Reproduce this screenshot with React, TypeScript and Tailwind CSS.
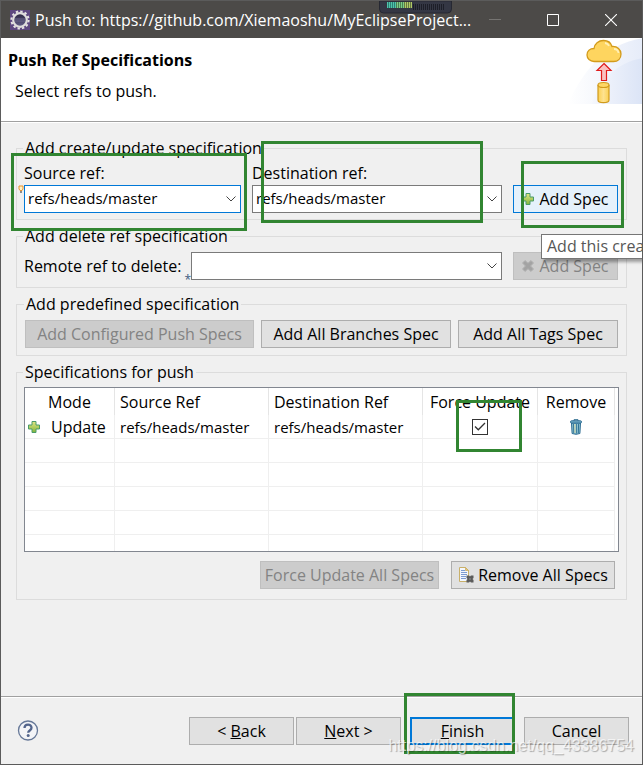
import type { ButtonHTMLAttributes, ReactNode, SelectHTMLAttributes } from "react";

function Highlight({ className }: { className: string }) {
  return (
    <span
      aria-hidden="true"
      className={`pointer-events-none absolute z-10 border-3 border-[#318531] ${className}`}
    />
  );
}

function Group({ title, className, children }: { title: string; className: string; children: ReactNode }) {
  return (
    <fieldset className={`min-w-0 border border-[#dcdcdc] ${className}`}>
      <legend className="-ml-px px-0.5 leading-6">{title}</legend>
      {children}
    </fieldset>
  );
}

function PushButton({ className = "", children, ...rest }: ButtonHTMLAttributes<HTMLButtonElement>) {
  return (
    <button
      type="button"
      className={`flex h-7 shrink-0 items-center justify-center whitespace-nowrap border border-[#adadad] bg-[#e1e1e1] disabled:border-[#bfbfbf] disabled:bg-[#cccccc] disabled:text-[#838383] ${className}`}
      {...rest}
    >
      {children}
    </button>
  );
}

function Combo({ focused, children, ...rest }: SelectHTMLAttributes<HTMLSelectElement> & { focused?: boolean }) {
  return (
    <div className="relative w-full">
      <select
        className={`block h-7 w-full appearance-none border bg-white pr-6 pb-0.5 pl-[3px] text-[15px] outline-none ${focused ? "border-[#0078d7]" : "border-[#7a7a7a]"}`}
        {...rest}
      >
        {children}
      </select>
      <svg className="pointer-events-none absolute top-[11px] right-[5px]" width="10" height="6" viewBox="0 0 10 6" fill="none" stroke="#444" strokeWidth="1">
        <path d="M.5.5 5 5 9.5.5" />
      </svg>
    </div>
  );
}

function PlusIcon() {
  return (
    <svg width="12" height="12" viewBox="0 0 12 12" className="shrink-0">
      <defs>
        <linearGradient id="plus" x1="0" y1="0" x2="0" y2="1">
          <stop offset="0" stopColor="#e4e584" />
          <stop offset="1" stopColor="#7fb53c" />
        </linearGradient>
      </defs>
      <path d="M4 .5h4V4h3.500v4H8v3.500H4V8H.5V4H4z" fill="url(#plus)" stroke="#4a9b68" />
    </svg>
  );
}

function CrossIcon() {
  return (
    <svg width="12" height="12" viewBox="0 0 12 12" className="shrink-0">
      <path d="M3 .5 6 3.2 9 .5 11.5 3 8.6 6l2.900 3L9 11.500 6 8.800 3 11.500.5 9l2.900-3L.5 3z" fill="#a3a3a3" stroke="#b2b2b2" />
    </svg>
  );
}

function TrashIcon() {
  return (
    <svg width="12" height="16" viewBox="0 0 12 16">
      <path d="M4 2V.7h4V2" fill="none" stroke="#2e6d8f" />
      <path d="M1.500 4h9l-.6 10.500q-3.900 1.600-7.800 0z" fill="#8fc3d2" stroke="#2d6c92" />
      <path d="M5 5v9" stroke="#eef3c0" strokeWidth="1.400" />
      <path d="M3.600 5l.2 9M6.300 5v9.500M8.600 5l-.3 9" stroke="#24688d" strokeWidth=".9" />
      <rect x=".5" y="1.800" width="11" height="2.200" rx="1" fill="#76afc9" stroke="#2d6c92" />
    </svg>
  );
}

function RemoveAllIcon() {
  return (
    <svg width="16" height="16" viewBox="0 0 16 16" className="shrink-0">
      <path d="M1.500 .5h6l3 3v11h-9z" fill="#f3f7fe" stroke="#c9b06a" />
      <path d="M7.500 .5v3h3z" fill="#e3c77e" stroke="#c9a95a" strokeWidth=".7" />
      <path d="M3 3.500h4M3 5.500h6M3 7.500h6M3 9.500h5M3 11.500h5" stroke="#7d9bd0" />
      <path d="M8.500 8.500h2.500l1 1 1-1h2.500v2.500l-1 1 1 1v2.500H13l-1-1-1 1H8.500V13l1-1-1-1z" fill="#5b5b5b" />
      <path d="M11.500 11.500h1v1h-1z" fill="#d0d0d0" />
    </svg>
  );
}

function EclipseIcon() {
  return (
    <svg width="20" height="20" viewBox="0 0 20 20" className="shrink-0">
      <defs>
        <linearGradient id="lens" x1="0" y1="0" x2="0" y2="1">
          <stop offset="0" stopColor="#29233f" />
          <stop offset="1" stopColor="#64608a" />
        </linearGradient>
      </defs>
      <rect width="20" height="20" fill="#5d4780" />
      <circle cx="10" cy="10" r="8.600" fill="none" stroke="#e6e4e4" strokeWidth="2" strokeDasharray="2.400 2.100" />
      <circle cx="10" cy="10" r="6.800" fill="url(#lens)" stroke="#dedcdc" strokeWidth="2.200" />
      <path d="M5 9h10M5 11h10" stroke="#8480a8" strokeWidth=".6" />
    </svg>
  );
}

function PushBanner() {
  return (
    <svg width="75" height="66" viewBox="-1 0 75 66" className="shrink-0">
      <defs>
        <linearGradient id="sky" x1="0" y1="0" x2="1" y2="0">
          <stop offset="0" stopColor="#ffffff" />
          <stop offset="1" stopColor="#e6ecf9" />
        </linearGradient>
        <linearGradient id="hill" x1="0" y1="0" x2="1" y2="0">
          <stop offset="0" stopColor="#f5f7fd" />
          <stop offset="1" stopColor="#dbe4f6" />
        </linearGradient>
        <linearGradient id="can" x1="0" y1="0" x2="1" y2="0">
          <stop offset="0" stopColor="#fbd052" />
          <stop offset=".5" stopColor="#fee290" />
          <stop offset="1" stopColor="#fbd052" />
        </linearGradient>
      </defs>
      <path d="M0 66C13 36 35 6 75 0V66z" fill="url(#sky)" />
      <path d="M24 66C30 44 48 24 75 20V66z" fill="url(#hill)" />
      <path d="M26 23.500c-4 0-7-3-7-6.500 0-4 3-6.500 7-6.500.5-4.500 4.500-8 9.500-8 4.500 0 7.500 2.500 8.500 6 5.500-.5 9 3.500 9 7.500 0 4.500-3 7.500-7.500 7.500z" fill="#fed55f" stroke="#d39b1c" strokeWidth="1.300" />
      <path d="M37 5q3 .5 4 3M46 11q4 0 4.500 4" fill="none" stroke="#fff0b8" strokeWidth="1.800" />
      <path d="M36 25.500 43 32.500H38.500V42.500H33.500V32.500H29z" fill="#fac0c0" stroke="#e01b1b" strokeWidth="1.200" />
      <path d="M30 47v15c0 3.500 11 3.500 11 0V47" fill="url(#can)" stroke="#d09a1b" strokeWidth="1.200" />
      <ellipse cx="35.500" cy="47" rx="5.500" ry="2.500" fill="#fed766" stroke="#d09a1b" strokeWidth="1.200" />
    </svg>
  );
}

function Gadget() {
  const bars = Array.from({ length: 29 }, (_, i) => i);
  return (
    <svg className="absolute top-0 left-[377px]" width="75" height="14" viewBox="0 0 75 14">
      <path d="M1.500 0v8q0 4 4 4h64q4 0 4-4V0z" fill="#343744" stroke="#262832" />
      <path d="M9 1h9v6H9z" fill="#2c7f74" />
      <path d="M18 1h8v6h-8z" fill="#4a7f50" />
      <path d="M26 1h8v6h-8z" fill="#67793f" />
      {bars.map((i) => (
        <path
          key={i}
          d={i < 13 ? `M${9.5 + i * 2} 1v6` : `M${9.5 + i * 2} 3v6`}
          stroke={i < 5 ? "#4fc4aa" : i < 9 ? "#7ccc88" : i < 13 ? "#b0c968" : "#1d1f28"}
        />
      ))}
    </svg>
  );
}

const cell = "border-r border-b border-[#efefef]";
const head = "border-r border-[#e5e5e5] font-normal";

export default function App() {
  return (
    <div className="relative flex min-h-screen flex-col overflow-hidden border border-[#5b5b5b] bg-[#f0f0f0] font-['Open_Sans','Noto_Sans',sans-serif] text-[16px] leading-5 text-black">
      <header className="relative flex h-[37px] items-center bg-[#4c4a48] pr-2 pl-[9px] text-white">
        <EclipseIcon />
        <h1 className="min-w-0 flex-1 overflow-hidden pl-[5px] whitespace-nowrap">Push to: https://github.com/Xiemaoshu/MyEclipseProject...</h1>
        <Gadget />
        <div className="flex shrink-0 items-center gap-3">
          <button type="button" aria-label="Minimize" className="flex h-9 w-[46px] items-center justify-center">
            <svg width="12" height="12" viewBox="0 0 12 12"><path d="M0 5.500h12" stroke="#767472" /></svg>
          </button>
          <button type="button" aria-label="Maximize" className="flex h-9 w-[46px] items-center justify-center">
            <svg width="12" height="12" viewBox="0 0 12 12"><path d="M.5.5h11v11H.5z" fill="none" stroke="#fff" /></svg>
          </button>
          <button type="button" aria-label="Close" className="flex h-9 w-[46px] items-center justify-center">
            <svg width="12" height="12" viewBox="0 0 12 12"><path d="m0 0 12 12M12 0 0 12" stroke="#fff" strokeWidth="1.100" /></svg>
          </button>
        </div>
      </header>

      <div className="flex h-[84px] justify-between border-b border-[#a0a0a0] bg-white">
        <div className="pt-3 pl-[7px]">
          <h2 className="font-bold">Push Ref Specifications</h2>
          <p className="mt-[11px] pl-[7px]">Select refs to push.</p>
        </div>
        <PushBanner />
      </div>

      <main className="flex flex-1 flex-col gap-1 border-t border-white px-[15px] pt-[13px]">
        <Group title="Add create/update specification" className="pt-px pr-2 pb-[6px] pl-[7px]">
          <div className="flex items-end gap-[11px]">
            <div className="relative w-[217px] shrink-0">
              <Highlight className="-top-2 -right-[6px] -bottom-[18px] -left-[13px]" />
              <label htmlFor="source" className="block leading-6">Source ref:</label>
              <svg className="absolute top-6 -left-[6px]" width="6" height="9" viewBox="0 0 6 9">
                <path d="M1 1h4v3L4 5.500H2L1 4z" fill="#fff3c8" stroke="#e8912d" />
                <path d="M2 6h2v2H2z" fill="#8c8c8c" />
              </svg>
              <Combo id="source" focused defaultValue="refs/heads/master"><option>refs/heads/master</option></Combo>
            </div>
            <div className="relative min-w-0 flex-1">
              <Highlight className="-top-5 right-[19px] -bottom-[10px] left-[9px]" />
              <label htmlFor="destination" className="block leading-6">Destination ref:</label>
              <Combo id="destination" defaultValue="refs/heads/master"><option>refs/heads/master</option></Combo>
            </div>
            <div className="relative w-[105px] shrink-0">
              <Highlight className="-top-6 -right-[6px] -bottom-[15px] left-2" />
              <PushButton aria-describedby="add-tip" className="w-full gap-[5px] border-[#0078d7]! bg-[#e5f1fb]!"><PlusIcon />Add Spec</PushButton>
              <div id="add-tip" role="tooltip" className="absolute top-[49px] left-7 z-20 h-[25px] whitespace-nowrap border border-[#767676] bg-white px-[5px] leading-[23px] text-[#575757] shadow-[3px_3px_3px_rgba(0,0,0,0.35)]">
                Add this create/update specification
              </div>
            </div>
          </div>
        </Group>

        <Group title="Add delete ref specification" className="pt-1 pr-2 pb-[7px] pl-[7px]">
          <div className="flex items-center">
            <label htmlFor="remote" className="relative w-[167px] shrink-0 whitespace-nowrap">
              Remote ref to delete:
              <span aria-hidden="true" className="absolute right-0 -bottom-3 text-xs text-[#3b5a80]">*</span>
            </label>
            <Combo id="remote" defaultValue=""><option value="" /></Combo>
            <PushButton disabled className="ml-[11px] w-[105px] gap-[5px]"><CrossIcon />Add Spec</PushButton>
          </div>
        </Group>

        <Group title="Add predefined specification" className="pt-1 pr-2 pb-[7px] pl-2">
          <div className="flex gap-[7px]">
            <PushButton disabled className="w-[229px]">Add Configured Push Specs</PushButton>
            <PushButton className="w-[190px]">Add All Branches Spec</PushButton>
            <PushButton className="flex-1">Add All Tags Spec</PushButton>
          </div>
        </Group>

        <Group title="Specifications for push" className="pt-[3px] pr-[7px] pb-[10px] pl-[7px]">
          <div className="h-[165px] overflow-hidden border border-[#828790] bg-white pr-[3px]">
            <table className="w-full table-fixed border-separate border-spacing-0">
              <colgroup>
                <col className="w-[90px]" />
                <col />
                <col />
                <col className="w-[115px]" />
                <col className="w-[77px]" />
              </colgroup>
              <thead>
                <tr className="h-[27px] text-left">
                  <th className={`${head} text-center`}>Mode</th>
                  <th className={`${head} pl-[5px]`}>Source Ref</th>
                  <th className={`${head} pl-[5px]`}>Destination Ref</th>
                  <th className={`${head} text-center whitespace-nowrap`}>Force Update</th>
                  <th className={`${head} text-center`}>Remove</th>
                </tr>
              </thead>
              <tbody>
                <tr className="h-6">
                  <td className={`${cell} pl-[3px]`}><span className="flex items-center gap-[11px]"><PlusIcon />Update</span></td>
                  <td className={`${cell} pl-[5px] text-[15px]`}>refs/heads/master</td>
                  <td className={`${cell} pl-[5px] text-[15px]`}>refs/heads/master</td>
                  <td className={cell}>
                    <div className="relative flex h-4 items-center justify-center">
                      <Highlight className="-top-[19px] right-[15px] -bottom-[17px] left-[33px]" />
                      <input
                        type="checkbox"
                        defaultChecked
                        aria-label="Force update refs/heads/master"
                        className="peer size-4 appearance-none border border-[#333] bg-white"
                      />
                      <svg className="pointer-events-none absolute hidden peer-checked:block" width="12" height="9" viewBox="0 0 12 9" fill="none" stroke="#333" strokeWidth="1.300">
                        <path d="M1 4.500 4.300 7.800 11 1" />
                      </svg>
                    </div>
                  </td>
                  <td className={cell}>
                    <button type="button" aria-label="Remove refs/heads/master" className="mx-auto block"><TrashIcon /></button>
                  </td>
                </tr>
                {[0, 1, 2, 3, 4].map((row) => (
                  <tr key={row} className="h-6">
                    <td className={cell} /><td className={cell} /><td className={cell} /><td className={cell} /><td className={cell} />
                  </tr>
                ))}
              </tbody>
            </table>
          </div>
          <div className="mt-[9px] flex justify-end gap-3 pr-1">
            <PushButton disabled className="w-[179px]">Force Update All Specs</PushButton>
            <PushButton className="w-[164px] gap-1"><RemoveAllIcon />Remove All Specs</PushButton>
          </div>
        </Group>
      </main>

      <footer className="relative flex h-[68px] shrink-0 items-center border-t border-[#a0a0a0] pt-px pr-[13px] pl-4 shadow-[inset_0_1px_0_#fff]">
        <button type="button" aria-label="Help">
          <svg width="22" height="22" viewBox="0 0 22 22">
            <circle cx="11" cy="10.500" r="9.500" fill="#f3f4f7" stroke="#667898" strokeWidth="1.300" />
            <path d="M7.500 8.100C7.500 3.500 14.500 3.500 14.500 7.800c0 2.700-3.300 2.600-3.300 5" fill="none" stroke="#53658c" strokeWidth="2.300" />
            <circle cx="11.200" cy="15.500" r="1.500" fill="#53658c" />
          </svg>
        </button>
        <div className="ml-auto flex">
          <PushButton className="w-[105px]"><span>&lt; <u>B</u>ack</span></PushButton>
          <PushButton className="ml-[2px] w-[105px]"><span><u>N</u>ext &gt;</span></PushButton>
          <div className="relative ml-[9px] w-[105px]">
            <Highlight className="-top-6 right-0 -bottom-[9px] -left-[6px]" />
            <PushButton className="w-full border-2 border-[#0078d7]!"><span><u>F</u>inish</span></PushButton>
          </div>
          <PushButton className="ml-[9px] w-[105px]">Cancel</PushButton>
        </div>
        <span className="pointer-events-none absolute right-2 bottom-2 z-20 font-['Liberation_Sans',sans-serif] text-[16px] text-white/70 [text-shadow:1px_1px_1px_rgba(0,0,0,0.3)]">
          https://blog.csdn.net/qq_43386754
        </span>
      </footer>
    </div>
  );
}
